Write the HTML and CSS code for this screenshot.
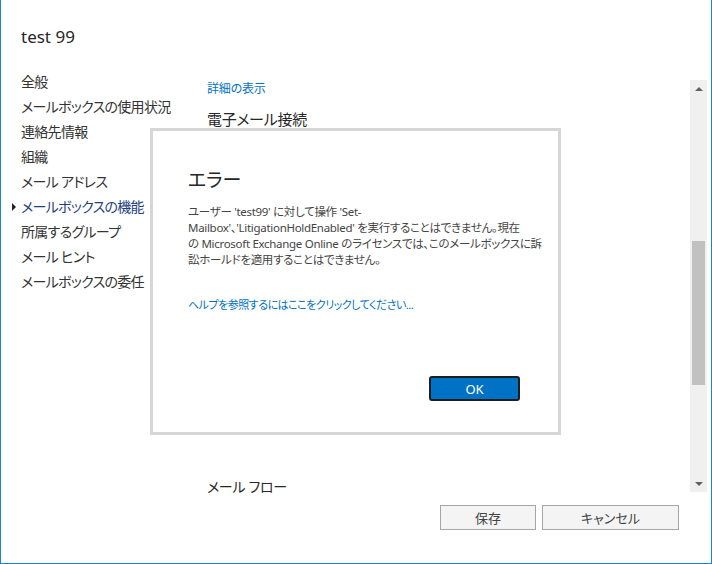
FILE: index.html
```html
<!DOCTYPE html>
<html lang="ja">
<head>
<meta charset="utf-8">
<title>test 99</title>
<link rel="stylesheet" href="styles.css">
</head>
<body>
<div class="page">
  <header class="header">
    <h1 class="title">test 99</h1>
  </header>
  <div class="main">
    <nav class="nav">
      <div class="nav-item">全般</div>
      <div class="nav-item">メールボックスの使用状況</div>
      <div class="nav-item">連絡先情報</div>
      <div class="nav-item">組織</div>
      <div class="nav-item">メール アドレス</div>
      <div class="nav-item selected">メールボックスの機能</div>
      <div class="nav-item">所属するグループ</div>
      <div class="nav-item">メール ヒント</div>
      <div class="nav-item">メールボックスの委任</div>
    </nav>
    <section class="content">
      <div class="scroll-area">
        <a class="details-link">詳細の表示</a>
        <div class="section-head">電子メール接続</div>
        <div class="spacer"></div>
        <div class="section-head flow">メール フロー</div>
      </div>
      <div class="scrollbar">
        <div class="arrow up"></div>
        <div class="track">
          <div class="thumb"></div>
        </div>
        <div class="arrow down"></div>
      </div>
    </section>
  </div>
  <footer class="footer">
    <button class="btn save">保存</button>
    <button class="btn cancel">キャンセル</button>
  </footer>

  <div class="dialog">
    <h2 class="dialog-title">エラー</h2>
    <p class="dialog-text">ユーザー 'test99' に対して操作 'Set-<br>Mailbox'、'LitigationHoldEnabled' を実行することはできません。現在<br>の Microsoft Exchange Online のライセンスでは、このメールボックスに訴<br>訟ホールドを適用することはできません。</p>
    <a class="dialog-link">ヘルプを参照するにはここをクリックしてください...</a>
    <div class="dialog-actions">
      <button class="ok">OK</button>
    </div>
  </div>
</div>
</body>
</html>
```

FILE: styles.css
```css
html, body {
  margin: 0;
  padding: 0;
  background: #ffffff;
}

.page {
  position: relative;
  width: 712px;
  height: 564px;
  box-sizing: border-box;
  border: 1px solid #1883d7;
  border-top: none;
  font-family: "Noto Sans", "Noto Sans CJK JP", sans-serif;
  font-feature-settings: "palt";
  color: #333333;
  display: flex;
  flex-direction: column;
}

.header {
  height: 69px;
  padding: 26px 0 0 20px;
  box-sizing: border-box;
}

.title {
  margin: 0;
  font-size: 17px;
  font-weight: 400;
  line-height: 22px;
  color: #262626;
}

.main {
  display: flex;
  height: 430px;
}

.nav {
  width: 185px;
  padding-left: 20px;
  box-sizing: border-box;
  flex: none;
}

.nav-item {
  position: relative;
  font-size: 14px;
  line-height: 25px;
  height: 25px;
  letter-spacing: -0.7px;
  color: #333333;
  white-space: nowrap;
}

.nav-item.selected {
  color: #1f3f85;
}

.nav-item.selected::before {
  content: "";
  position: absolute;
  left: -9px;
  top: 9px;
  border-left: 4px solid #222222;
  border-top: 4px solid transparent;
  border-bottom: 4px solid transparent;
}

.content {
  flex: 1;
  display: flex;
  padding-top: 11px;
}

.scroll-area {
  flex: 1;
  padding-left: 21px;
  display: flex;
  flex-direction: column;
}

.details-link {
  font-size: 12px;
  line-height: 18px;
  color: #0072c6;
  letter-spacing: -0.2px;
}

.section-head {
  font-size: 15px;
  line-height: 20px;
  color: #262626;
  margin-top: 11px;
  letter-spacing: -0.3px;
}

.spacer {
  flex: 1;
}

.section-head.flow {
  margin-top: 0;
  margin-bottom: 2px;
  font-size: 14px;
}

.scrollbar {
  width: 17px;
  height: 412px;
  margin-right: 4px;
  background: #f0f0f0;
  display: flex;
  flex-direction: column;
  align-items: center;
}

.arrow {
  width: 0;
  height: 0;
  border-left: 4px solid transparent;
  border-right: 4px solid transparent;
  flex: none;
}

.arrow.up {
  margin-top: 7px;
  border-bottom: 4px solid #606060;
}

.arrow.down {
  margin-bottom: 6px;
  border-top: 4px solid #606060;
}

.track {
  flex: 1;
  width: 100%;
  display: flex;
  flex-direction: column;
  align-items: center;
  padding-top: 150px;
  box-sizing: border-box;
}

.thumb {
  width: 13px;
  height: 144px;
  background: #c1c1c1;
}

.footer {
  display: flex;
  justify-content: flex-end;
  gap: 6px;
  padding: 6px 32px 0 0;
}

.btn {
  height: 25px;
  box-sizing: border-box;
  border: 1px solid #a6a6a6;
  background: #f4f4f4;
  color: #444444;
  font-family: "Noto Sans", "Noto Sans CJK JP", sans-serif;
  font-feature-settings: "palt";
  font-size: 13px;
  padding: 0;
  line-height: 22px;
}

.btn.save {
  width: 96px;
}

.btn.cancel {
  width: 137px;
}

.dialog {
  position: absolute;
  left: 149px;
  top: 128px;
  width: 411px;
  height: 307px;
  box-sizing: border-box;
  border: 3px solid #d6d6d6;
  background: #ffffff;
  padding: 36px 35px 0 35px;
  display: flex;
  flex-direction: column;
}

.dialog-title {
  margin: 0;
  font-size: 19px;
  font-weight: 400;
  line-height: 26px;
  color: #262626;
}

.dialog-text {
  margin: 11px 0 0 0;
  font-size: 11.5px;
  letter-spacing: -0.3px;
  line-height: 16px;
  color: #444444;
  white-space: nowrap;
}

.dialog-link {
  margin-top: 29px;
  font-size: 11px;
  letter-spacing: -0.5px;
  line-height: 16px;
  color: #0072c6;
}

.dialog-actions {
  display: flex;
  justify-content: flex-end;
  padding-right: 3px;
  margin-top: 63px;
}

.ok {
  width: 91px;
  height: 25px;
  box-sizing: border-box;
  background: #0072c6;
  border: 2px solid #1e1e1e;
  border-radius: 3px;
  color: #ffffff;
  font-family: "Noto Sans", sans-serif;
  font-size: 13px;
  padding: 0;
  line-height: 20px;
}
```
